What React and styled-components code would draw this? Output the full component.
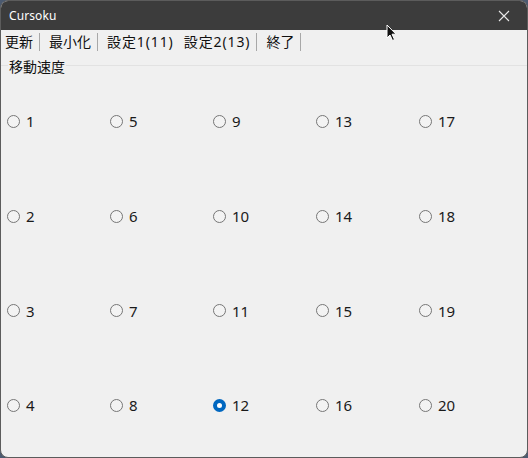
import React, { useState } from 'react';
import styled, { createGlobalStyle } from 'styled-components';

const GlobalStyle = createGlobalStyle`
  html, body {
    margin: 0;
    padding: 0;
    background: #4b5a70;
  }
  body {
    font-family: 'Noto Sans', 'Noto Sans CJK JP', sans-serif;
  }
`;

const menuItems = [
  { label: '更新', sep: true },
  { label: '最小化', sep: true },
  { label: '設定1(11)', sep: false },
  { label: '設定2(13)', sep: true },
  { label: '終了', sep: true },
];

const speeds = Array.from({ length: 20 }, (_, i) => i + 1);

const App = () => {
  const [speed, setSpeed] = useState(12);

  return (
    <>
      <GlobalStyle />
      <Window>
        <TitleBar>
          <Title>Cursoku</Title>
          <CloseButton aria-label="close">
            <svg width="12" height="12" viewBox="0 0 12 12">
              <path d="M1 1L11 11M11 1L1 11" stroke="#e8e8e8" strokeWidth="1.1" />
            </svg>
          </CloseButton>
          <Cursor width="12" height="18" viewBox="0 0 12 18">
            <path d="M1 1L1 14L4 11L6.5 16.5L8.5 15.5L6 10.2L10 10.2Z" fill="#111" stroke="#fff" strokeWidth="1" />
          </Cursor>
        </TitleBar>

        <MenuBar>
          {menuItems.map((m) => (
            <MenuItem key={m.label} $sep={m.sep} $wide={m.label.length > 3}>
              {m.label}
            </MenuItem>
          ))}
        </MenuBar>

        <Group>
          <GroupLabel>移動速度</GroupLabel>
          <RadioGrid>
            {speeds.map((n) => (
              <RadioLabel key={n}>
                <RadioInput
                  type="radio"
                  name="speed"
                  checked={speed === n}
                  onChange={() => setSpeed(n)}
                />
                <RadioText>{n}</RadioText>
              </RadioLabel>
            ))}
          </RadioGrid>
        </Group>
      </Window>
    </>
  );
};

export default App;

const Window = styled.div`
  width: 528px;
  height: 458px;
  box-sizing: border-box;
  border: 1px solid #5c5c5c;
  border-radius: 8px;
  background: #f0f0f0;
  overflow: hidden;
  display: flex;
  flex-direction: column;
`;

const TitleBar = styled.div`
  position: relative;
  height: 29px;
  flex-shrink: 0;
  background: #3c3c3c;
  display: flex;
  align-items: center;
  justify-content: space-between;
  padding: 0 0 0 8px;
`;

const Title = styled.span`
  color: #ffffff;
  font-size: 12px;
  letter-spacing: 0.1px;
`;

const CloseButton = styled.div`
  width: 46px;
  height: 29px;
  display: flex;
  align-items: center;
  justify-content: center;
`;

const Cursor = styled.svg`
  position: absolute;
  left: 385px;
  top: 23px;
`;

const MenuBar = styled.div`
  height: 23px;
  flex-shrink: 0;
  display: flex;
  align-items: center;
  padding: 0 0 0 4px;
`;

const MenuItem = styled.span`
  font-size: 14px;
  color: #111;
  line-height: 18px;
  padding-right: ${(p) => (p.$sep ? '6px' : '0')};
  margin-right: ${(p) => (p.$sep ? '9px' : '10px')};
  letter-spacing: ${(p) => (p.$wide ? '0.9px' : '0')};
  border-right: ${(p) => (p.$sep ? '1px solid #a8a8a8' : 'none')};
`;

const Group = styled.div`
  flex: 1;
  display: flex;
  flex-direction: column;
  align-items: flex-start;
  border-top: 1px solid #e2e2e2;
  margin-top: 12px;
`;

const GroupLabel = styled.div`
  font-size: 14px;
  color: #111;
  margin: -9px 0 0 7px;
  padding: 0 1px;
  line-height: 20px;
  background: #f0f0f0;
`;

const RadioGrid = styled.div`
  display: grid;
  grid-template-columns: repeat(5, 103px);
  grid-template-rows: repeat(4, 94.7px);
  grid-auto-flow: column;
  padding-left: 6px;
  margin-top: -3px;
`;

const RadioLabel = styled.label`
  display: flex;
  align-items: center;
  gap: 6px;
  cursor: pointer;
`;

const RadioInput = styled.input`
  appearance: none;
  margin: 0;
  width: 13px;
  height: 13px;
  border-radius: 50%;
  border: 1px solid #767676;
  background: #f3f3f3;
  box-sizing: border-box;

  &:checked {
    border: 4px solid #0067c0;
    background: #ffffff;
  }
`;

const RadioText = styled.span`
  font-size: 15px;
  color: #1a1a1a;
  line-height: 18px;
`;
